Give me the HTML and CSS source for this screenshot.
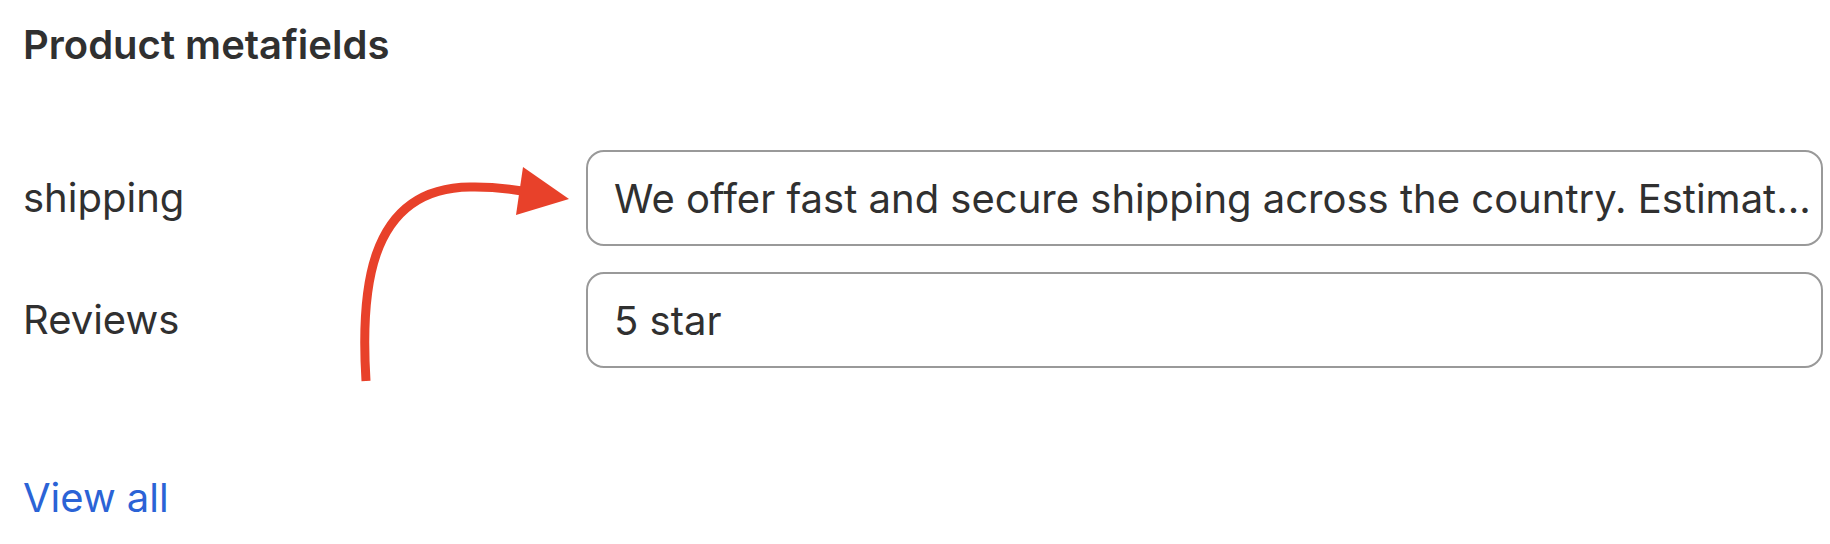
FILE: index.html
```html
<!DOCTYPE html>
<html lang="en">
<head>
    <meta charset="UTF-8">
    <meta name="viewport" content="width=device-width, initial-scale=1.0">
    <title>Product metafields</title>
    <link rel="stylesheet" href="styles.css">
</head>
<body>

    <div class="card">
        <h2 class="card-title">Product metafields</h2>

        <div class="fields">
            <div class="field-label">shipping</div>
            <div class="field-value">We offer fast and secure shipping across the country. Estimat...</div>

            <div class="field-label">Reviews</div>
            <div class="field-value">5 star</div>
        </div>

        <a class="view-all" href="#">View all</a>

        <!-- red annotation arrow drawn over the card -->
        <svg class="annotation" width="1830" height="544" viewBox="0 0 1830 544">
            <path d="M366 381 C361 300, 364 188, 470 187 C495 186.5, 510 189, 522 191" fill="none" stroke="#e8412a" stroke-width="9"/>
            <polygon points="569,199 523,167 516,215" fill="#e8412a"/>
        </svg>
    </div>

</body>
</html>
```

FILE: styles.css
```css
body {
    margin: 0;
    font-family: Inter, "Noto Sans", sans-serif;
    color: #303030;
    background: #fff;
}
.card {
    position: relative;
    padding: 21px 7px 0 23px;
    height: 544px;
    box-sizing: border-box;
}
.card-title {
    margin: 0;
    font-size: 40px;
    line-height: 48px;
    font-weight: 600;
}
.fields {
    display: grid;
    grid-template-columns: 563px 1fr;
    row-gap: 26px;
    align-items: center;
    margin-top: 81px;
}
.field-label {
    font-size: 40px;
    line-height: 48px;
}
.field-value {
    height: 96px;
    box-sizing: border-box;
    border: 2px solid #999;
    border-radius: 18px;
    padding: 0 26px;
    display: flex;
    align-items: center;
    font-size: 40px;
    white-space: nowrap;
    overflow: hidden;
}
.view-all {
    display: inline-block;
    margin-top: 106px;
    font-size: 40px;
    line-height: 48px;
    color: #2b63d6;
    text-decoration: none;
}
.annotation {
    position: absolute;
    left: 0;
    top: 0;
    pointer-events: none;
}
```
